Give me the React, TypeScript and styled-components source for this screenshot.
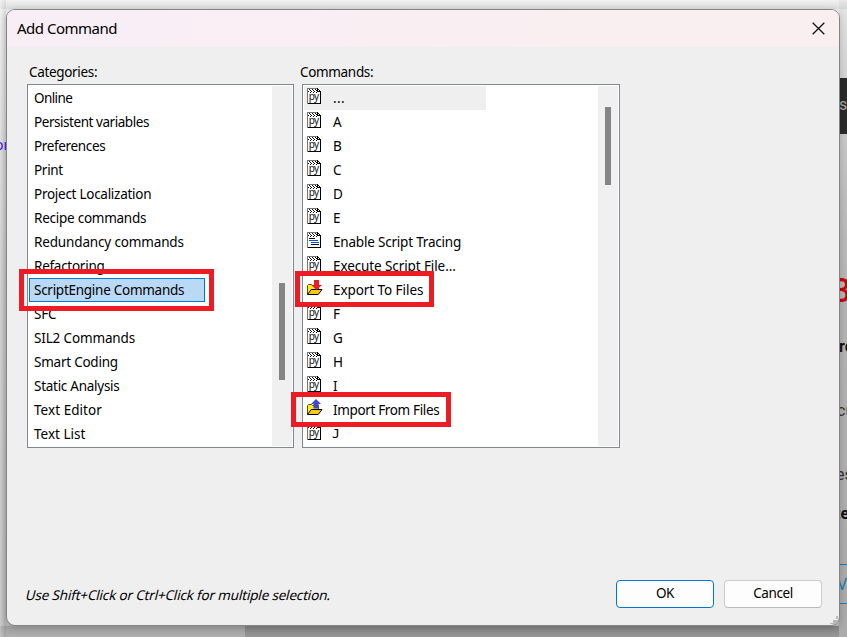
import React from "react";
import styled, { createGlobalStyle, css } from "styled-components";

const GlobalStyle = createGlobalStyle`
  * { box-sizing: border-box; }
  html, body { margin: 0; padding: 0; overflow: hidden; }
  body { font-family: "Noto Sans", "Open Sans", sans-serif; font-size: 13px; color: #000; }
`;

const Desktop = styled.main`
  position: relative;
  display: grid;
  grid-template-columns: 6px 833px 8px;
  grid-template-rows: 9px 617px 11px;
  width: 847px;
  height: 637px;
  overflow: hidden;
  background:
    linear-gradient(to bottom, #a3a3a3, #b0b0b0) 0 626px / 245px 11px no-repeat,
    linear-gradient(to bottom, #858585, #989898) 245px 626px / 594px 11px no-repeat,
    linear-gradient(to bottom, #f1f1f1, #dedede) 0 0 / 847px 9px no-repeat,
    linear-gradient(to bottom, #efefef, #d8d8d8 150px, #c8c8c8 300px, #bcbcbc);
`;

const LeftPage = styled.aside`
  grid-column: 1;
  grid-row: 1 / -1;
  padding-top: 134px;
  background: linear-gradient(to right, rgba(255, 255, 255, 0.25), rgba(0, 0, 0, 0.07));
  color: #3a16e0;
  font-size: 14px;
  line-height: 22px;
  span { margin-left: -5px; }
`;

const RightPage = styled.aside`
  grid-column: 3;
  grid-row: 1 / -1;
  display: grid;
  grid-template-rows: 78px 56px 126px 60px 52px 76px 52px 26px 38px 40px 33px;
  background: linear-gradient(to bottom, rgba(0, 0, 0, 0.04), rgba(0, 0, 0, 0.09) 200px);
`;

const PageBit = styled.div<{
  $size?: number;
  $weight?: number;
  $color?: string;
  $shift?: number;
  $kind?: "band" | "button";
}>`
  display: flex;
  align-items: center;
  white-space: nowrap;
  font-family: Roboto, sans-serif;
  font-size: ${(p) => p.$size ?? 16}px;
  font-weight: ${(p) => p.$weight ?? 400};
  color: ${(p) => p.$color ?? "#333"};
  text-indent: ${(p) => p.$shift ?? 0}px;
  ${(p) => p.$kind === "band" && css`background: #2b2b2b; padding-bottom: 4px;`}
  ${(p) =>
    p.$kind === "button" &&
    css`
      border: solid #1681b5;
      border-width: 1px 0;
    `}
`;

const Dialog = styled.section`
  position: relative;
  grid-column: 2;
  grid-row: 2;
  width: 834px;
  display: flex;
  flex-direction: column;
  background: #efefef;
  border: 1px solid #858585;
  border-radius: 9px;
  box-shadow: 0 2px 9px rgba(0, 0, 0, 0.2);
`;

const TitleBar = styled.header`
  height: 37px;
  display: flex;
  align-items: center;
  justify-content: space-between;
  padding: 0 14px 0 10px;
  border-radius: 8px 8px 0 0;
  background: linear-gradient(to right, #f8eef6, #f9eff1 70%, #f9eff0);
  font: 400 15px/20px "Noto Sans", sans-serif;
  svg { display: block; }
`;

const Title = styled.h1`
  margin: 0 0 1px;
  font: inherit;
  letter-spacing: -0.5px;
`;

const Body = styled.div`
  display: grid;
  grid-template-columns: 267px 318px;
  column-gap: 8px;
  padding: 15px 0 0 20px;
`;

const Label = styled.div<{ $indent: number }>`
  height: 22px;
  line-height: 20px;
  text-indent: ${(p) => p.$indent}px;
  font-size: 13.5px;
  letter-spacing: -0.33px;
`;

const ListBox = styled.div`
  display: grid;
  grid-template-columns: 1fr 20px;
  height: 364px;
  padding: 1px;
  border: 1px solid #828790;
  background: #fff;
`;

const Rows = styled.ul`
  margin: 0;
  padding: 0;
  list-style: none;
`;

const Row = styled.li<{ $state?: "selected" | "hover" }>`
  display: flex;
  align-items: center;
  height: 24px;
  border: 1px solid transparent;
  font-size: 13.5px;
  line-height: 20px;
  white-space: pre;
  ${(p) =>
    p.$state === "selected" &&
    css`
      width: 176px;
      border-color: #0078d7;
      background: #bad9f5;
    `}
  ${(p) =>
    p.$state === "hover" &&
    css`
      width: 182px;
      background: #efefef;
    `}
`;

const RowText = styled.span<{ $spacing?: number; $mono?: boolean }>`
  margin-left: ${(p) => (p.$mono ? 3 : 4)}px;
  letter-spacing: ${(p) => p.$spacing ?? -0.2}px;
  ${(p) => p.$mono && css`font-family: "DejaVu Sans Mono", monospace; font-size: 13px;`}
`;

const IconSlot = styled.span`
  display: block;
  width: 24px;
  height: 20px;
  padding-left: 2px;
  svg { display: block; overflow: visible; }
`;

const Track = styled.div<{ $top: number }>`
  background: #f0f0f0;
  padding: ${(p) => p.$top}px 0 0 7px;
`;

const Thumb = styled.div<{ $height: number }>`
  width: 6px;
  height: ${(p) => p.$height}px;
  background: #858585;
`;

const Footer = styled.footer`
  margin-top: auto;
  display: flex;
  align-items: center;
  gap: 10px;
  padding: 0 17px 17px 19px;
`;

const Hint = styled.p`
  flex: 1;
  margin: 1px 0 0;
  font-size: 13.5px;
  line-height: 20px;
  letter-spacing: -0.18px;
  transform: skewX(-14deg);
`;

const Button = styled.button<{ $primary?: boolean }>`
  width: 98px;
  height: 28px;
  padding: 0 0 2px;
  border: 1px solid ${(p) => (p.$primary ? "#0078d4" : "#cdcdcd")};
  border-bottom-color: ${(p) => (p.$primary ? "#0078d4" : "#bababa")};
  border-radius: 4px;
  background: #fdfdfd;
  color: #000;
  font: 13.5px/20px "Noto Sans", sans-serif;
  letter-spacing: -0.4px;
`;

const Grip = styled.svg`
  position: absolute;
  right: 0;
  bottom: 0;
`;

const Callout = styled.div<{ $x: number; $y: number; $w: number; $h: number }>`
  position: absolute;
  left: ${(p) => p.$x}px;
  top: ${(p) => p.$y}px;
  width: ${(p) => p.$w}px;
  height: ${(p) => p.$h}px;
  border: 5px solid #ed1c24;
  pointer-events: none;
`;

type IconKind = "py" | "script" | "export" | "import";

function DocumentFrame() {
  return (
    <>
      <path d="M0 0H11L14 3V16H0Z" fill="#fff" />
      <path d="M10.5 .5V3.5H13.5V15.5H0M10 .5L13.5 3.5" fill="none" stroke="#000" />
      <path d="M.5 16V.5H10" fill="none" stroke="#777" />
      <path
        d="M2 1h1v1h-1zM3 2h1v1h-1zM4 3h1v1h-1zM3 4h1v1h-1zM5 1h1v1h-1zM6 2h1v1h-1zM7 3h1v1h-1zM6 4h1v1h-1zM8 1h1v1h-1zM9 2h1v1h-1zM9 4h1v1h-1zM1 3h1v1h-1z"
        fill="#111"
      />
    </>
  );
}

function CommandIcon({ kind }: { kind: IconKind }) {
  if (kind === "py" || kind === "script") {
    return (
      <svg width="14" height="16" viewBox="0 0 14 16">
        <g shapeRendering="crispEdges"><DocumentFrame /></g>
        {kind === "py" ? (
          <text x="1.7" y="12" fontFamily="Noto Sans, sans-serif" fontSize="10" textLength="10.3" fill="#111">
            py
          </text>
        ) : (
          <g shapeRendering="crispEdges">
            <path d="M2 6.5h6M4 12.5h8" stroke="#111" />
            <path d="M2 8.5h9M4 10.5h8" stroke="#0751e6" />
          </g>
        )}
      </svg>
    );
  }
  return (
    <svg width="16" height="16" viewBox="0 0 16 16">
      <path d="M.5 14.5V5.5L1.5 4.5H4.5L5.5 5.5H11.5V9" fill="#ffee16" stroke="#5e5200" />
      <path d="M.5 14.5L4.2 9.5H15L11.2 14.5Z" fill="#ffc90e" stroke="#000" />
      {kind === "export" ? (
        <path d="M7 0h5v5h3L9.5 10 4.3 5H7Z" fill="#ed1c24" />
      ) : (
        <path d="M9 -1L14 4H11.5V8.5H6.5V4H4Z" fill="#3f48cc" />
      )}
    </svg>
  );
}

const categories: [string, number?][] = [
  ["Online", -0.6],
  ["Persistent variables", -0.45],
  ["Preferences", -0.35],
  ["Print", -0.3],
  ["Project Localization", -0.27],
  ["Recipe commands", -0.25],
  ["Redundancy commands", -0.15],
  ["Refactoring", -0.27],
  ["ScriptEngine Commands", -0.27],
  ["SFC"],
  ["SIL2 Commands", -0.15],
  ["Smart Coding", -0.24],
  ["Static Analysis", -0.27],
  ["Text Editor", 0.05],
  ["Text List", 0],
];

const commands: [string, IconKind, number?][] = [
  ["...", "py", 0.4],
  ["A", "py"],
  ["B", "py"],
  ["C", "py"],
  ["D", "py"],
  ["E", "py"],
  ["Enable Script Tracing", "script"],
  ["Execute Script File...", "py", -0.1],
  ["Export To Files", "export", -0.07],
  ["F", "py"],
  ["G", "py"],
  ["H", "py"],
  ["I", "py"],
  ["Import From Files", "import", -0.35],
  ["J", "py"],
];

export default function App() {
  return (
    <>
      <GlobalStyle />
      <Desktop>
        <LeftPage><span>or</span></LeftPage>
        <RightPage>
          <PageBit />
          <PageBit $kind="band" $color="#aaa" $size={16}>s</PageBit>
          <PageBit />
          <PageBit $color="#cc000c" $size={34} $weight={500} $shift={-7}>3</PageBit>
          <PageBit $color="#111" $weight={700} $shift={0}>re</PageBit>
          <PageBit $shift={-2}>cu</PageBit>
          <PageBit $shift={-3}>es</PageBit>
          <PageBit $color="#111" $weight={700} $shift={-4}>te</PageBit>
          <PageBit />
          <PageBit $kind="button" $color="#1681b5" $shift={-2}>V</PageBit>
        </RightPage>

        <Dialog role="dialog" aria-label="Add Command">
          <TitleBar>
            <Title>Add Command</Title>
            <svg width="13" height="13" viewBox="0 0 13 13" fill="none" stroke="#111" strokeWidth="1.3">
              <path d="M.7.7 12.3 12.3M12.3.7.7 12.3" />
            </svg>
          </TitleBar>
          <Body>
            <div>
              <Label $indent={2}>Categories:</Label>
              <ListBox>
                <Rows>
                  {categories.map(([name, spacing]) => (
                    <Row key={name} $state={name === "ScriptEngine Commands" ? "selected" : undefined}>
                      <RowText $spacing={spacing}>{name}</RowText>
                    </Row>
                  ))}
                </Rows>
                <Track $top={197}><Thumb $height={97} /></Track>
              </ListBox>
            </div>
            <div>
              <Label $indent={-2}>Commands:</Label>
              <ListBox>
                <Rows>
                  {commands.map(([name, kind, spacing], i) => (
                    <Row key={name} $state={i === 0 ? "hover" : undefined}>
                      <IconSlot><CommandIcon kind={kind} /></IconSlot>
                      <RowText $spacing={spacing} $mono={name === "J"}>{name}</RowText>
                    </Row>
                  ))}
                </Rows>
                <Track $top={21}><Thumb $height={78} /></Track>
              </ListBox>
            </div>
          </Body>
          <Footer>
            <Hint>Use Shift+Click or Ctrl+Click for multiple selection.</Hint>
            <Button $primary>OK</Button>
            <Button>Cancel</Button>
          </Footer>
          <Grip width="9" height="9" viewBox="0 0 9 9" fill="#b8b8b8">
            <path d="M6 0h2v3H6zM3 4h5v2L6 8H3zM0 7h3v1H0z" />
          </Grip>
        </Dialog>

        <Callout $x={19} $y={269} $w={195} $h={42} />
        <Callout $x={295} $y={271} $w={139} $h={36} />
        <Callout $x={291} $y={392} $w={160} $h={35} />
      </Desktop>
    </>
  );
}
